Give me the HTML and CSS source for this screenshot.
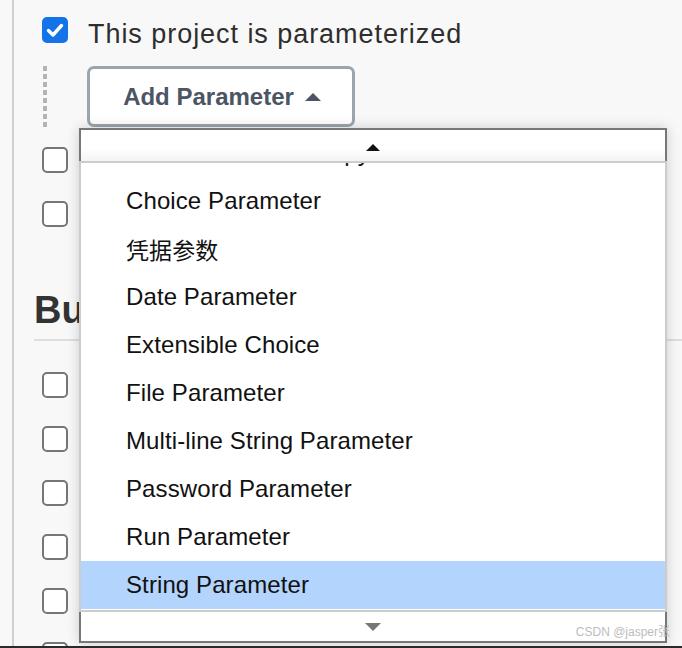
FILE: index.html
```html
<!DOCTYPE html>
<html>
<head>
<meta charset="utf-8">
<link rel="stylesheet" href="styles.css">
</head>
<body>
<div class="viewport">
  <div class="page">
    <div class="section">
      <div class="row">
        <span class="cb on"><svg viewBox="0 0 26 26" width="26" height="26"><path d="M6.5 13.5 L11 18 L19.5 8.5" fill="none" stroke="#fff" stroke-width="3.4" stroke-linecap="round" stroke-linejoin="round"/></svg></span>
        <span class="label">This project is parameterized</span>
      </div>
      <div class="nested">
        <button class="add-btn">Add Parameter <span class="caret"></span></button>
      </div>
      <div class="cbrow first"><span class="cb"></span></div>
      <div class="cbrow"><span class="cb"></span></div>
    </div>
    <h2 class="heading">Build Triggers</h2>
    <div class="cbrow after-heading"><span class="cb"></span></div>
    <div class="cbrow"><span class="cb"></span></div>
    <div class="cbrow"><span class="cb"></span></div>
    <div class="cbrow"><span class="cb"></span></div>
    <div class="cbrow"><span class="cb"></span></div>
    <div class="cbrow"><span class="cb"></span></div>
  </div>

  <div class="dropdown">
    <div class="scroll-up"><span class="arrow-up"></span></div>
    <div class="list">
      <ul class="items">
        <li>Build selector for Copy Artifact</li>
        <li>Choice Parameter</li>
        <li class="cjk">凭据参数</li>
        <li>Date Parameter</li>
        <li>Extensible Choice</li>
        <li>File Parameter</li>
        <li>Multi-line String Parameter</li>
        <li>Password Parameter</li>
        <li>Run Parameter</li>
        <li class="selected">String Parameter</li>
      </ul>
    </div>
    <div class="scroll-down"><span class="arrow-down"></span></div>
  </div>
  <div class="watermark">CSDN @jasper张</div>
</div>
</body>
</html>
```

FILE: styles.css
```css
* { box-sizing: border-box; }
html, body { margin: 0; padding: 0; }
body {
  background: #f8f8f8;
  font-family: "Liberation Sans", Arial, "Noto Sans CJK SC", sans-serif;
  color: #333;
}
.viewport {
  position: relative;
  width: 682px;
  height: 648px;
  overflow: hidden;
  border-bottom: 2px solid #2a2a2a;
}
.page {
  margin-left: 12px;
  border-left: 2px solid #cfcfcf;
  height: 100%;
  padding-left: 28px;
  padding-top: 17px;
}
.row {
  display: flex;
  align-items: center;
  height: 26px;
}
.cb {
  display: block;
  width: 26px;
  height: 26px;
  border: 2px solid #767676;
  border-radius: 5px;
  background: #fff;
  flex: none;
}
.cb.on {
  border: none;
  background: #1473e8;
}
.cb.on svg { display: block; }
.label {
  margin-left: 20px;
  font-size: 27px;
  letter-spacing: 0.95px;
  color: #2e2e2e;
  position: relative;
  top: 4px;
  white-space: nowrap;
}
.nested {
  margin-top: 23px;
  height: 62px;
  display: flex;
  align-items: flex-start;
  background: repeating-linear-gradient(to bottom, #b4b4b4 0 5px, transparent 5px 8px) no-repeat 1px 0 / 4px 100%;
  padding-left: 45px;
}
.add-btn {
  width: 268px;
  height: 61px;
  border: 3px solid #9aa6ad;
  border-radius: 7px;
  background: #fff;
  font-family: "Liberation Sans", Arial, sans-serif;
  font-weight: bold;
  font-size: 24px;
  color: #4b5563;
  display: flex;
  align-items: center;
  justify-content: center;
  gap: 11px;
  padding: 0 0 0 2px;
}
.caret {
  width: 0; height: 0;
  border-left: 8px solid transparent;
  border-right: 8px solid transparent;
  border-bottom: 8px solid #4b5563;
}
.cbrow { height: 26px; margin-top: 28px; }
.cbrow.first { margin-top: 19px; }
.heading {
  margin: 61px 0 0 -8px;
  font-size: 38px;
  line-height: 44px;
  font-weight: bold;
  color: #333;
  padding-bottom: 7px;
  border-bottom: 2px solid #dedede;
  white-space: nowrap;
}
.cbrow.after-heading { margin-top: 31px; }

.dropdown {
  position: absolute;
  left: 79px;
  top: 128px;
  width: 588px;
  height: 515px;
  border: 2px solid #777;
  background: #fff;
  box-shadow: 0 0 12px rgba(0,0,0,0.18);
  display: flex;
  flex-direction: column;
}
.scroll-up {
  height: 31px;
  flex: none;
  display: flex;
  align-items: center;
  justify-content: center;
  background: linear-gradient(to bottom, #fff 60%, #f4f4f4);
}
.arrow-up {
  width: 0; height: 0;
  border-left: 7px solid transparent;
  border-right: 7px solid transparent;
  border-bottom: 7px solid #111;
  margin-top: 4px;
}
.list {
  flex: none;
  height: 451px;
  margin: 0 -2px;
  border: 2px solid #cccccc;
  overflow: hidden;
  background: #fff;
  padding-bottom: 2px;
}
.items {
  list-style: none;
  margin: -34px 0 0 0;
  padding: 0;
}
.items li {
  height: 48px;
  line-height: 48px;
  padding-left: 45px;
  font-size: 24px;
  letter-spacing: 0.1px;
  color: #111;
  white-space: nowrap;
}
.items li.cjk {
  font-family: "Noto Sans CJK SC", sans-serif;
  font-size: 23px;
}
.items li.selected { background: #b3d4fc; }
.scroll-down {
  flex: 1;
  display: flex;
  align-items: center;
  justify-content: center;
}
.arrow-down {
  width: 0; height: 0;
  border-left: 8px solid transparent;
  border-right: 8px solid transparent;
  border-top: 8px solid #777;
}
.watermark {
  position: absolute;
  right: 12px;
  bottom: 7px;
  font-size: 12px;
  color: #bdbdbd;
  font-family: "Liberation Sans", Arial, "Noto Sans CJK SC", sans-serif;
}
```
